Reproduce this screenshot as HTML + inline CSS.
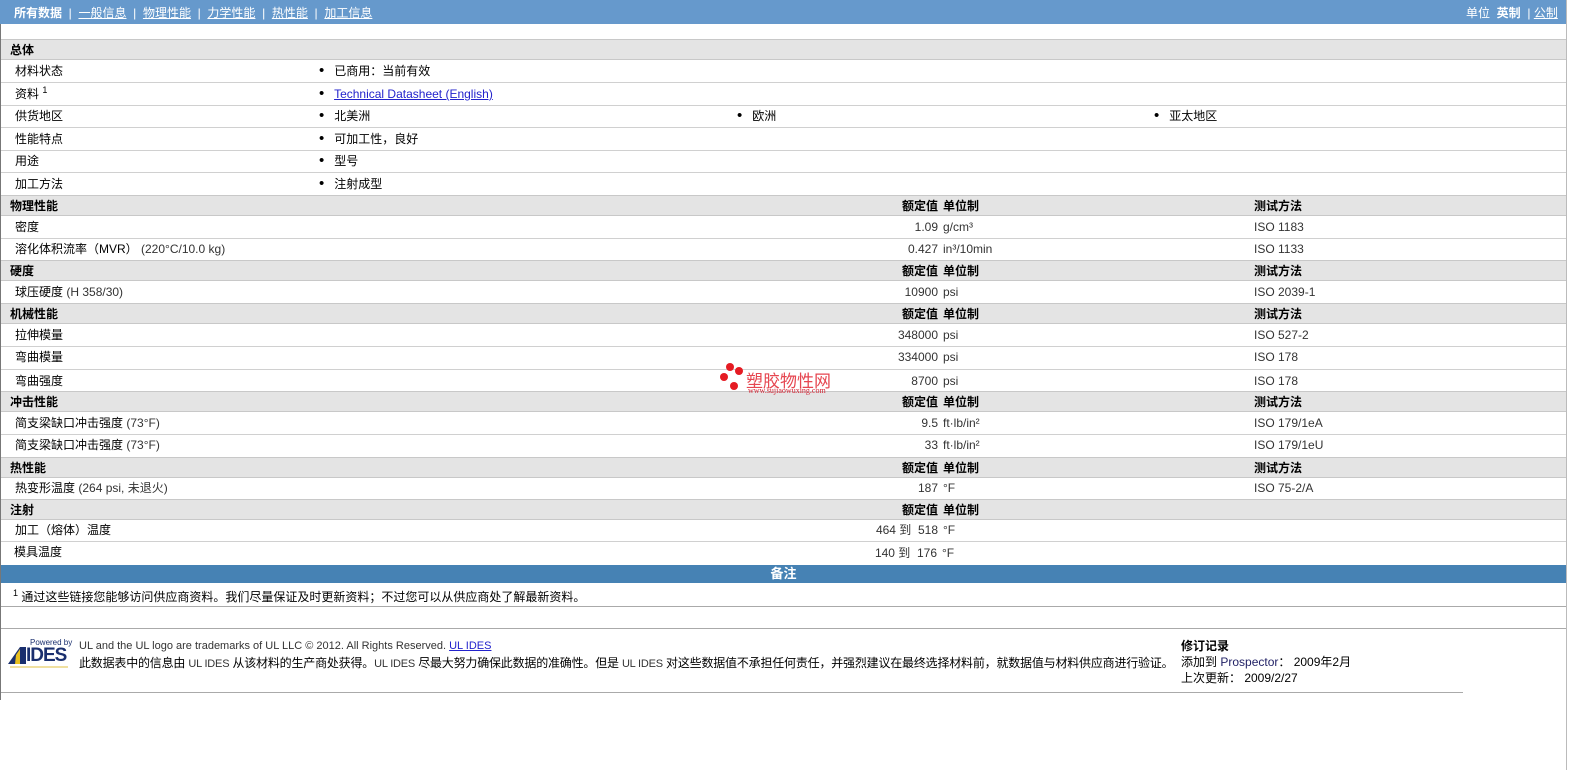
<!DOCTYPE html>
<html><head><meta charset="utf-8"><style>
body{margin:0;width:1585px;height:770px;overflow:hidden;background:#fff;font-family:"Liberation Sans","Noto Sans CJK SC",sans-serif;font-size:12px;color:#000;position:relative}
.a{position:absolute;white-space:nowrap}
.top{left:0;top:0;width:1566px;height:24px;background:#6699cc;color:#fff}
.top a{color:#fff;text-decoration:underline}
.h{left:1px;width:1565px;height:19px;background:#e4e4e4;border-top:1px solid #c8c8c8;border-bottom:1px solid #c8c8c8;font-weight:bold}
.r{left:1px;width:1565px;border-bottom:1px solid #d0d0d0}
.t{line-height:20px}
.num{text-align:right;width:200px;left:737px}
.g{color:#333}
.b{font-size:15px;line-height:12px}
.sp{font-size:9px;position:relative;top:-5px}
</style></head><body>
<div class="a" style="left:0;top:0;width:1px;height:700px;background:#777"></div>
<div class="a" style="left:1566px;top:0;width:1px;height:770px;background:#bbb"></div>
<div class="a top">
<span class="a" style="left:14px;top:4px"><b>所有数据</b> &nbsp;| &nbsp;<a>一般信息</a> &nbsp;| &nbsp;<a>物理性能</a> &nbsp;| &nbsp;<a>力学性能</a> &nbsp;| &nbsp;<a>热性能</a> &nbsp;| &nbsp;<a>加工信息</a></span>
<span class="a" style="left:1466px;top:4px">单位 &nbsp;<b>英制</b> &nbsp;| <a>公制</a></span>
</div>

<div class="a h" style="top:39px"><span class="a t" style="left:9px">总体</span></div>
<div class="a r" style="top:60px;height:22px"><span class="a t" style="left:14px;top:1px">材料状态</span><span class="a t" style="left:318px;top:1px"><span class="b">•</span>&nbsp;&nbsp; 已商用：当前有效</span></div>
<div class="a r" style="top:83px;height:22px"><span class="a t" style="left:14px;top:1px">资料 <span class="sp">1</span></span><span class="a t" style="left:318px;top:1px"><span class="b">•</span>&nbsp;&nbsp; <a style="color:#2222cc;text-decoration:underline">Technical Datasheet (English)</a></span></div>
<div class="a r" style="top:106px;height:21px"><span class="a t" style="left:14px">供货地区</span><span class="a t" style="left:318px"><span class="b">•</span>&nbsp;&nbsp; 北美洲</span><span class="a t" style="left:736px"><span class="b">•</span>&nbsp;&nbsp; 欧洲</span><span class="a t" style="left:1153px"><span class="b">•</span>&nbsp;&nbsp; 亚太地区</span></div>
<div class="a r" style="top:128px;height:22px"><span class="a t" style="left:14px;top:1px">性能特点</span><span class="a t" style="left:318px;top:1px"><span class="b">•</span>&nbsp;&nbsp; 可加工性，良好</span></div>
<div class="a r" style="top:151px;height:21px"><span class="a t" style="left:14px">用途</span><span class="a t" style="left:318px"><span class="b">•</span>&nbsp;&nbsp; 型号</span></div>
<div class="a r" style="top:173px;height:22px"><span class="a t" style="left:14px;top:1px">加工方法</span><span class="a t" style="left:318px;top:1px"><span class="b">•</span>&nbsp;&nbsp; 注射成型</span></div>

<div class="a h" style="top:195px"><span class="a t" style="left:9px">物理性能</span><span class="a t num">额定值</span><span class="a t" style="left:942px">单位制</span><span class="a t" style="left:1253px">测试方法</span></div>
<div class="a r" style="top:216px;height:22px"><span class="a t" style="left:14px;top:1px">密度</span><span class="a t num g" style="top:1px">1.09</span><span class="a t g" style="left:942px;top:1px">g/cm³</span><span class="a t g" style="left:1253px;top:1px">ISO 1183</span></div>
<div class="a r" style="top:239px;height:21px"><span class="a t" style="left:14px">溶化体积流率（MVR） <span class="g">(220°C/10.0 kg)</span></span><span class="a t num g">0.427</span><span class="a t g" style="left:942px">in³/10min</span><span class="a t g" style="left:1253px">ISO 1133</span></div>
<div class="a h" style="top:260px"><span class="a t" style="left:9px">硬度</span><span class="a t num">额定值</span><span class="a t" style="left:942px">单位制</span><span class="a t" style="left:1253px">测试方法</span></div>
<div class="a r" style="top:281px;height:22px"><span class="a t" style="left:14px;top:1px">球压硬度 <span class="g">(H 358/30)</span></span><span class="a t num g" style="top:1px">10900</span><span class="a t g" style="left:942px;top:1px">psi</span><span class="a t g" style="left:1253px;top:1px">ISO 2039-1</span></div>
<div class="a h" style="top:303px"><span class="a t" style="left:9px">机械性能</span><span class="a t num">额定值</span><span class="a t" style="left:942px">单位制</span><span class="a t" style="left:1253px">测试方法</span></div>
<div class="a r" style="top:324px;height:22px"><span class="a t" style="left:14px;top:1px">拉伸模量</span><span class="a t num g" style="top:1px">348000</span><span class="a t g" style="left:942px;top:1px">psi</span><span class="a t g" style="left:1253px;top:1px">ISO 527-2</span></div>
<div class="a r" style="top:347px;height:22px"><span class="a t" style="left:14px">弯曲模量</span><span class="a t num g">334000</span><span class="a t g" style="left:942px">psi</span><span class="a t g" style="left:1253px">ISO 178</span></div>
<div class="a r" style="top:370px;height:21px"><span class="a t" style="left:14px;top:1px">弯曲强度</span><span class="a t num g" style="top:1px">8700</span><span class="a t g" style="left:942px;top:1px">psi</span><span class="a t g" style="left:1253px;top:1px">ISO 178</span></div>
<div class="a h" style="top:391px"><span class="a t" style="left:9px">冲击性能</span><span class="a t num">额定值</span><span class="a t" style="left:942px">单位制</span><span class="a t" style="left:1253px">测试方法</span></div>
<div class="a r" style="top:412px;height:22px"><span class="a t" style="left:14px;top:1px">简支梁缺口冲击强度 <span class="g">(73°F)</span></span><span class="a t num g" style="top:1px">9.5</span><span class="a t g" style="left:942px;top:1px">ft·lb/in²</span><span class="a t g" style="left:1253px;top:1px">ISO 179/1eA</span></div>
<div class="a r" style="top:435px;height:22px"><span class="a t" style="left:14px">简支梁缺口冲击强度 <span class="g">(73°F)</span></span><span class="a t num g">33</span><span class="a t g" style="left:942px">ft·lb/in²</span><span class="a t g" style="left:1253px">ISO 179/1eU</span></div>
<div class="a h" style="top:457px"><span class="a t" style="left:9px">热性能</span><span class="a t num">额定值</span><span class="a t" style="left:942px">单位制</span><span class="a t" style="left:1253px">测试方法</span></div>
<div class="a r" style="top:478px;height:21px"><span class="a t" style="left:14px">热变形温度 <span class="g">(264 psi, 未退火)</span></span><span class="a t num g">187</span><span class="a t g" style="left:942px">°F</span><span class="a t g" style="left:1253px">ISO 75-2/A</span></div>
<div class="a h" style="top:499px"><span class="a t" style="left:9px">注射</span><span class="a t num">额定值</span><span class="a t" style="left:942px">单位制</span></div>
<div class="a r" style="top:520px;height:21px"><span class="a t" style="left:14px">加工（熔体）温度</span><span class="a t num g">464 到&nbsp; 518</span><span class="a t g" style="left:942px">°F</span></div>
<div class="a" style="left:1px;top:542px;height:22px"><span class="a t" style="left:13px;top:0">模具温度</span></div>
<span class="a t num g" style="top:543px">140 到&nbsp; 176</span><span class="a t g" style="left:942px;top:543px">°F</span>

<div class="a" style="left:1px;top:565px;width:1565px;height:18px;background:#4682b4;color:#fff;font-weight:bold;text-align:center;line-height:17px;font-size:13px">备注</div>
<div class="a" style="left:13px;top:588px"><span class="sp">1</span> 通过这些链接您能够访问供应商资料。我们尽量保证及时更新资料；不过您可以从供应商处了解最新资料。</div>
<div class="a" style="left:1px;top:606px;width:1565px;height:1px;background:#aaa"></div>
<div class="a" style="left:1px;top:628px;width:1565px;height:1px;background:#aaa"></div>

<div class="a" style="left:8px;top:640px;width:62px;height:26px">
<span class="a" style="left:22px;top:-2px;font-size:8px;color:#1a2f6e">Powered by</span>
<svg class="a" style="left:0;top:5px" width="18" height="20"><polygon points="0,19 12,2 18,2 18,19" fill="#1a2f6e"/><polygon points="8,10 12,4 12,19 7,19" fill="#e8c020"/></svg>
<span class="a" style="left:18px;top:5px;font-size:19px;font-weight:bold;color:#1a2f6e;letter-spacing:-1px">IDES</span>
<div class="a" style="left:2px;top:26px;width:58px;height:2px;background:#f0e0a0"></div>
</div>
<div class="a" style="left:79px;top:640px;font-size:11px;color:#333">UL and the UL logo are trademarks of UL LLC © 2012. All Rights Reserved. <span style="color:#2222cc;text-decoration:underline">UL IDES</span></div>
<div class="a" style="left:79px;top:654px;letter-spacing:-0.2px">此数据表中的信息由 <span style="font-size:11px;color:#333">UL IDES</span> 从该材料的生产商处获得。<span style="font-size:11px;color:#333">UL IDES</span> 尽最大努力确保此数据的准确性。但是 <span style="font-size:11px;color:#333">UL IDES</span> 对这些数据值不承担任何责任，并强烈建议在最终选择材料前，就数据值与材料供应商进行验证。</div>
<div class="a" style="left:1181px;top:637px;font-weight:bold">修订记录</div>
<div class="a" style="left:1181px;top:653px">添加到 <span style="color:#222266">Prospector</span>： 2009年2月</div>
<div class="a" style="left:1181px;top:669px">上次更新： 2009/2/27</div>
<div class="a" style="left:1px;top:692px;width:1462px;height:1px;background:#aaa"></div>

<div class="a" style="left:720px;top:362px;width:130px;height:36px">
<div class="a" style="left:6px;top:1px;width:8px;height:8px;border-radius:50%;background:#e51b23"></div>
<div class="a" style="left:15px;top:5px;width:8px;height:8px;border-radius:50%;background:#e51b23"></div>
<div class="a" style="left:0;top:11px;width:8px;height:8px;border-radius:50%;background:#e51b23"></div>
<div class="a" style="left:10px;top:20px;width:8px;height:8px;border-radius:50%;background:#e51b23"></div>
<span class="a" style="left:26px;top:5px;font-size:17px;color:#e64650">塑胶物性网</span>
<span class="a" style="left:28px;top:24px;font-size:8px;color:#d02030;font-family:'Liberation Serif',serif">www.sujiaowuxing.com</span>
</div>
</body></html>
